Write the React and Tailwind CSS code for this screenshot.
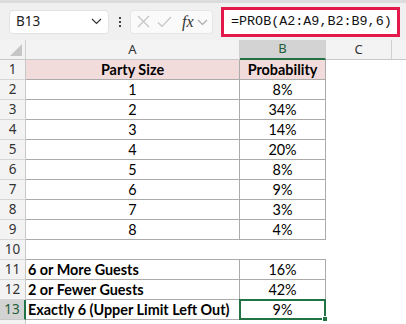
import React from 'react'

// Excel sheet showing a PROB example
const rows = [
  { n: 1, a: 'Party Size', b: 'Probability', head: true },
  { n: 2, a: '1', b: '8%' },
  { n: 3, a: '2', b: '34%' },
  { n: 4, a: '3', b: '14%' },
  { n: 5, a: '4', b: '20%' },
  { n: 6, a: '5', b: '8%' },
  { n: 7, a: '6', b: '9%' },
  { n: 8, a: '7', b: '3%' },
  { n: 9, a: '8', b: '4%' },
  { n: 10, blank: true },
  { n: 11, a: '6 or More Guests', b: '16%', label: true },
  { n: 12, a: '2 or Fewer Guests', b: '42%', label: true },
  { n: 13, a: 'Exactly 6 (Upper Limit Left Out)', b: '9%', label: true, selected: true },
  { n: 14, tail: true },
]

const uiFont = { fontFamily: '"Noto Sans", "Open Sans", sans-serif' }
const cellFont = { fontFamily: 'Lato, "Liberation Sans", sans-serif' }

function Chevron({ color = '#555' }) {
  return (
    <svg width="11" height="7" viewBox="0 0 11 7" fill="none">
      <path d="M1 1 L5.5 5.5 L10 1" stroke={color} strokeWidth="1.2" />
    </svg>
  )
}

function FormulaBar() {
  return (
    <div className="h-[37px] bg-[#f0f0f0] flex items-center" style={uiFont}>
      <div className="ml-[9px] w-[100px] h-[24px] bg-white rounded-[4px] border border-[#e2e2e2] flex items-center justify-between pl-[6px] pr-[6px]">
        <span className="text-[13.5px] text-[#222] leading-none">B13</span>
        <Chevron color="#333" />
      </div>
      <div className="ml-[9px] w-[3px] flex flex-col gap-[2px] items-center">
        <div className="w-[2px] h-[2px] bg-[#444]" />
        <div className="w-[2px] h-[2px] bg-[#444]" />
        <div className="w-[2px] h-[2px] bg-[#444]" />
      </div>
      <div className="ml-[9px] w-[83px] h-[24px] bg-[#fafafa] rounded-[4px] border border-[#e6e6e6] flex items-center pl-[6px]">
        <svg width="13" height="13" viewBox="0 0 13 13" fill="none">
          <path d="M1 1 L12 12 M12 1 L1 12" stroke="#c4c4c4" strokeWidth="1.2" />
        </svg>
        <svg className="ml-[7px]" width="15" height="12" viewBox="0 0 15 12" fill="none">
          <path d="M1 6.5 L5 10.5 L14 1" stroke="#c4c4c4" strokeWidth="1.2" />
        </svg>
        <span className="ml-[10px] text-[16px] italic text-[#333] leading-none" style={{ fontFamily: '"Liberation Serif", serif' }}>fx</span>
        <span className="ml-[3px] mt-[2px]"><Chevron color="#aaa" /></span>
      </div>
      <div className="ml-[8px] w-[179px] h-[30px] bg-white border-[3px] border-[#e3194b] flex items-center pl-[7px]">
        <span className="text-[13.4px] text-[#111] leading-none" style={{ fontFamily: '"Liberation Mono", monospace' }}>=PROB(A2:A9,B2:B9,6)</span>
      </div>
    </div>
  )
}

function ColumnHeaders() {
  return (
    <div className="h-[20px] flex bg-[#f3f3f3] border-b border-[#c8c8c8] text-[13px] text-[#333]" style={uiFont}>
      <div className="w-[26px] border-r border-[#d0d0d0] relative">
        <svg className="absolute right-[3px] bottom-[3px]" width="12" height="12" viewBox="0 0 12 12">
          <path d="M12 0 L12 12 L0 12 Z" fill="#c6c6c6" />
        </svg>
      </div>
      <div className="w-[214px] border-r border-[#d0d0d0] flex items-center justify-center">A</div>
      <div className="w-[86px] border-r border-[#d0d0d0] bg-[#d3d3d3] text-[#1e5e38] flex items-center justify-center -mb-px border-b-2 border-b-[#217346]">B</div>
      <div className="w-[66px] border-r border-[#d0d0d0] flex items-center justify-center">C</div>
      <div className="flex-1" />
    </div>
  )
}

function Row({ r }) {
  const rowHead = (
    <div
      className={
        r.selected
          ? 'w-[26px] bg-[#d3d3d3] text-[#1e5e38] border-r-2 border-r-[#217346] border-b border-b-[#c8c8c8] flex items-center justify-center'
          : 'w-[26px] bg-[#f3f3f3] text-[#333] border-r border-r-[#c8c8c8] border-b border-b-[#d6d6d6] flex items-center justify-center'
      }
      style={uiFont}
    >
      {r.tail ? '' : r.n}
    </div>
  )

  if (r.tail) {
    return <div className="h-[20px] flex text-[13.5px]">{rowHead}</div>
  }

  if (r.blank) {
    return (
      <div className="h-[20px] flex text-[13.5px]">
        {rowHead}
        <div className="w-[300px] border-b border-[#ababab]" />
      </div>
    )
  }

  const fill = r.head ? 'bg-[#f2dcdb] font-bold' : 'bg-white'
  return (
    <div className="h-[20px] flex text-[13.5px]">
      {rowHead}
      <div
        className={`w-[214px] border-r border-b border-[#ababab] flex items-center text-[14.4px] text-black ${fill} ${r.label ? 'font-bold justify-start pl-[2px]' : 'justify-center'}`}
        style={cellFont}
      >
        {r.a}
      </div>
      <div className={`w-[86px] border-r border-b border-[#ababab] flex items-center justify-center text-[14.4px] text-black relative ${fill}`} style={cellFont}>
        {r.b}
        {r.selected && (
          <div className="absolute -left-px -top-px -right-px -bottom-px border-2 border-[#217346]">
            <div className="absolute -right-[4px] -bottom-[4px] w-[6px] h-[6px] bg-[#217346] border border-white" />
          </div>
        )}
      </div>
    </div>
  )
}

export default function App() {
  return (
    <div className="w-[406px] h-[324px] bg-white overflow-hidden">
      <div className="h-[3px] bg-[#dcdcdc]" />
      <FormulaBar />
      <ColumnHeaders />
      {rows.map((r) => (
        <Row key={r.n} r={r} />
      ))}
    </div>
  )
}
